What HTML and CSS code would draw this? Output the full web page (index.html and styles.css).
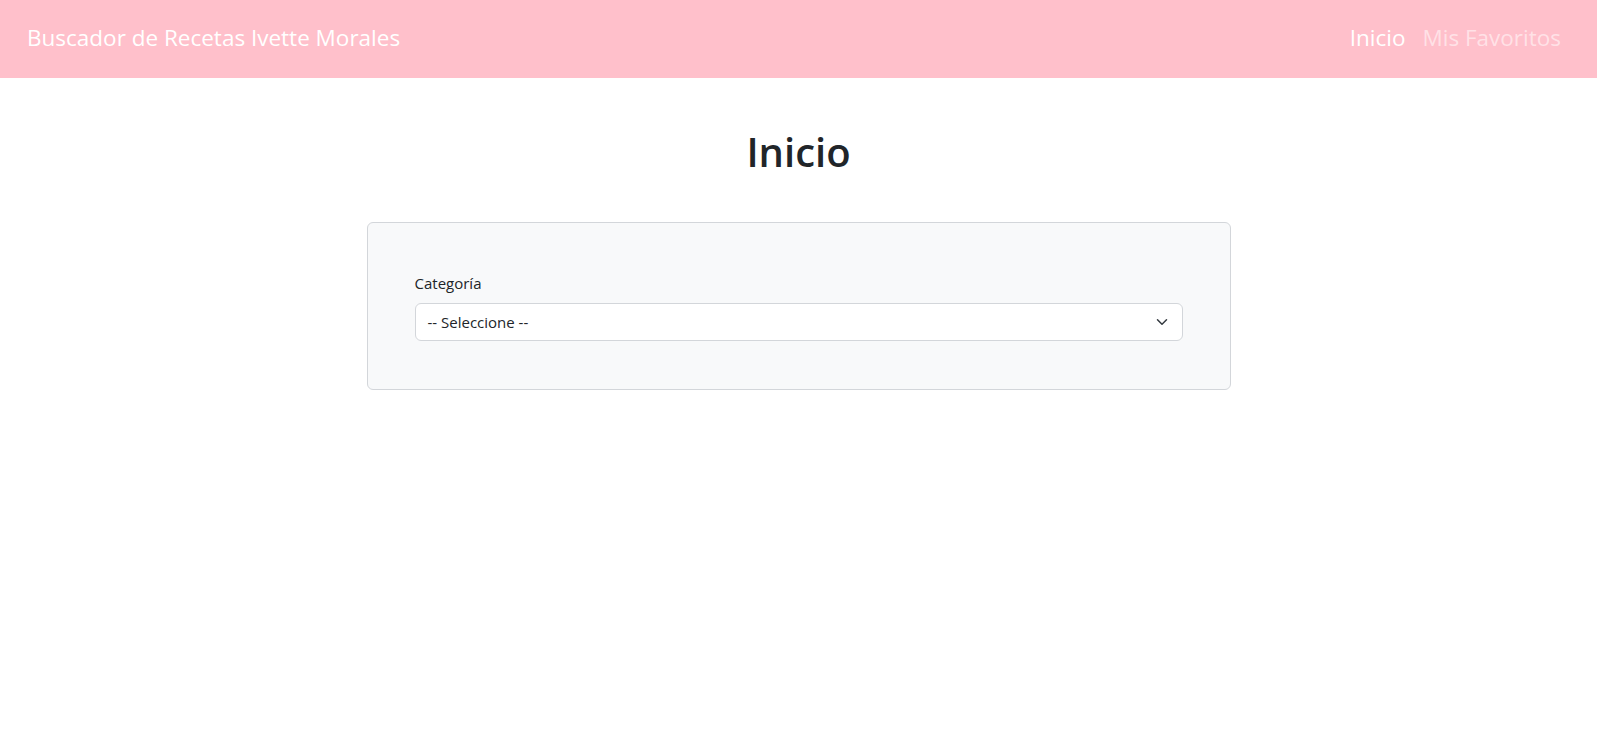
FILE: index.html
```html
<!DOCTYPE html>
<html lang="es">
<head>
<meta charset="utf-8">
<title>Buscador de Recetas</title>
<link rel="stylesheet" href="styles.css">
</head>
<body>
<header class="navbar">
  <a class="brand" href="#">Buscador de Recetas Ivette Morales</a>
  <nav class="nav">
    <a class="nav-link active" href="#">Inicio</a>
    <a class="nav-link" href="#">Mis Favoritos</a>
  </nav>
</header>
<main class="main">
  <h1 class="title">Inicio</h1>
  <form class="card">
    <label class="label" for="cat">Categoría</label>
    <div class="select">
      <span class="select-text">-- Seleccione --</span>
      <svg class="chev" width="16" height="12" viewBox="0 0 16 16"><path d="m2 5 6 6 6-6" fill="none" stroke="#343a40" stroke-width="2" stroke-linecap="round" stroke-linejoin="round"/></svg>
    </div>
  </form>
</main>
</body>
</html>
```
FILE: styles.css
```css
* { box-sizing: border-box; }
body {
  margin: 0;
  font-family: "Open Sans", "Noto Sans", sans-serif;
  color: #212529;
  background: #fff;
  font-size: 16px;
}
.navbar {
  height: 78px;
  background: #ffc0cb;
  display: flex;
  align-items: center;
  justify-content: space-between;
  padding: 0 36px 3px 27px;
}
.brand, .nav-link {
  color: #fff;
  text-decoration: none;
  font-size: 22.5px;
}
.nav { display: flex; gap: 17px; }
.nav-link { color: rgba(255,255,255,0.55); }
.nav-link.active { color: #fff; }
.main {
  display: flex;
  flex-direction: column;
  align-items: center;
}
.title {
  margin: 50px 0 46px;
  font-size: 40px;
  line-height: 48px;
  font-weight: 600;
}
.card {
  width: 864px;
  background: #f8f9fa;
  border: 1px solid #d3d6da;
  border-radius: 6px;
  padding: 48px 47px 48px;
  display: flex;
  flex-direction: column;
}
.label {
  font-size: 15px;
  line-height: 24px;
  margin-bottom: 8px;
}
.select {
  height: 38px;
  background: #fff;
  border: 1px solid #d3d6da;
  border-radius: 6px;
  display: flex;
  align-items: center;
  justify-content: space-between;
  padding: 0 12px 0 12px;
  font-size: 15px;
}
```
